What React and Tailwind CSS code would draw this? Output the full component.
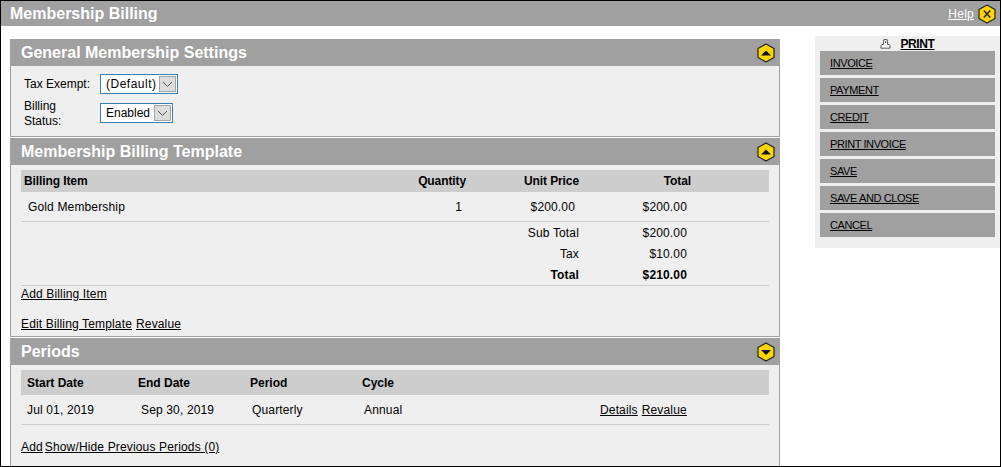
const sans = { fontFamily: '"Liberation Sans", Arial, sans-serif' };

function Hex({ children, size = 20 }) {
  return (
    <svg width={size} height={size} viewBox="0 0 20 20" className="shrink-0">
      <path d="M10 1 L18 5.5 V14.5 L10 19 L2 14.5 V5.5 Z" fill="#fdd600" stroke="#222" strokeWidth="1.2" strokeLinejoin="round" />
      {children}
    </svg>
  );
}

const ArrowUp = () => <path d="M5 12.5 L10 7.5 L15 12.5 Z" fill="#111" />;
const ArrowDown = () => <path d="M5 8 L15 8 L10 13 Z" fill="#111" />;

function SectionHeader({ title, down }) {
  return (
    <div className="flex h-[27px] items-center justify-between bg-[#a0a0a0] pl-[11px] pr-[4px]">
      <span className="text-[16px] font-bold tracking-normal text-white">{title}</span>
      <Hex>{down ? <ArrowDown /> : <ArrowUp />}</Hex>
    </div>
  );
}

function FakeSelect({ label, width, spacing }) {
  return (
    <div className={`flex h-[20px] items-center justify-between border border-[#3c7fb1] bg-white pr-px pl-[5px] ${width}`}>
      <span className={`text-[12px] text-black ${spacing}`}>{label}</span>
      <span className="flex h-[16px] w-[17px] items-center justify-center border border-[#a5a5a5] bg-[#dcdcdc]">
        <svg width="11" height="7" viewBox="0 0 11 7"><path d="M1 1 L5.5 5.5 L10 1" fill="none" stroke="#555" strokeWidth="1" /></svg>
      </span>
    </div>
  );
}

const TextLink = ({ children }) => <a className="text-[12px] text-black underline">{children}</a>;

const actions = ['INVOICE', 'PAYMENT', 'CREDIT', 'PRINT INVOICE', 'SAVE', 'SAVE AND CLOSE', 'CANCEL'];

export default function App() {
  return (
    <div style={sans} className="flex h-[467px] w-[1001px] flex-col overflow-hidden border border-black bg-white text-[12px] tracking-[0.15px] text-black">
      {/* page title */}
      <div className="flex h-[25px] shrink-0 items-center justify-between bg-[#a0a0a0] pr-[3px] pl-[9px]">
        <span className="text-[16px] font-bold tracking-normal text-white">Membership Billing</span>
        <div className="flex items-center gap-[3px]">
          <a className="text-[12px] tracking-[0.25px] text-white underline">Help</a>
          <Hex>
            <path d="M6.8 6.5 L13.2 13.5 M13.2 6.5 L6.8 13.5" stroke="#222" strokeWidth="1.5" fill="none" />
          </Hex>
        </div>
      </div>

      <div className="flex min-h-0 flex-1 pl-[9px]">
        {/* main column */}
        <div className="w-[770px] shrink-0 pt-[13px]">
          <SectionHeader title="General Membership Settings" />
          <div className="h-[71px] border-x border-b border-[#a0a0a0] bg-[#efefef] pt-[8px] pl-[13px]">
            <div className="flex h-[20px] items-center">
              <span className="w-[76px] tracking-normal">Tax Exempt:</span>
              <FakeSelect label="(Default)" width="w-[78px]" spacing="tracking-[0.5px]" />
            </div>
            <div className="mt-[9px] flex h-[20px] items-center">
              <span className="w-[76px] pt-[2px] leading-[15px] tracking-normal">Billing<br />Status:</span>
              <FakeSelect label="Enabled" width="w-[73px]" spacing="tracking-normal" />
            </div>
          </div>

          <div className="mt-px">
            <SectionHeader title="Membership Billing Template" />
          </div>
          <div className="h-[172px] border-x border-b border-[#a0a0a0] bg-[#efefef] px-[10px] pt-[5px]">
            <div className="flex h-[22px] items-center bg-[#cdcdcd] font-bold tracking-[-0.1px]">
              <span className="w-[395px] pl-[3px]">Billing Item</span>
              <span className="w-[50px] text-right">Quantity</span>
              <span className="w-[113px] text-right">Unit Price</span>
              <span className="w-[112px] text-right">Total</span>
            </div>
            <div className="flex h-[30px] items-center border-b border-[#cdcdcd]">
              <span className="w-[399px] pl-[7px]">Gold Membership</span>
              <span className="w-[42px] text-right">1</span>
              <span className="w-[113px] text-right">$200.00</span>
              <span className="w-[112px] text-right">$200.00</span>
            </div>
            <div className="flex h-[21px] items-center">
              <span className="w-[558px] text-right">Sub Total</span>
              <span className="w-[108px] text-right">$200.00</span>
            </div>
            <div className="flex h-[21px] items-center">
              <span className="w-[558px] text-right">Tax</span>
              <span className="w-[108px] text-right">$10.00</span>
            </div>
            <div className="flex h-[22px] items-center border-b border-[#cdcdcd] font-bold">
              <span className="w-[558px] text-right">Total</span>
              <span className="w-[108px] text-right">$210.00</span>
            </div>
            <div className="mt-px h-[30px] leading-[15px]">
              <TextLink>Add Billing Item</TextLink>
            </div>
            <div className="flex gap-[4px] leading-[15px]">
              <TextLink>Edit Billing Template</TextLink>
              <TextLink>Revalue</TextLink>
            </div>
          </div>

          <div className="mt-px">
            <SectionHeader title="Periods" down />
          </div>
          <div className="h-[120px] border-x border-[#a0a0a0] bg-[#efefef] px-[10px] pt-[5px]">
            <div className="flex h-[25px] items-center bg-[#cdcdcd] font-bold tracking-normal">
              <span className="w-[117px] pl-[6px]">Start Date</span>
              <span className="w-[112px]">End Date</span>
              <span className="w-[112px]">Period</span>
              <span>Cycle</span>
            </div>
            <div className="flex h-[30px] items-center border-b border-[#cdcdcd]">
              <span className="w-[120px] pl-[6px]">Jul 01, 2019</span>
              <span className="w-[111px]">Sep 30, 2019</span>
              <span className="w-[112px]">Quarterly</span>
              <span className="w-[236px]">Annual</span>
              <span className="flex gap-[4px]">
                <TextLink>Details</TextLink>
                <TextLink>Revalue</TextLink>
              </span>
            </div>
            <div className="mt-[15px] flex gap-[2px] leading-[15px]">
              <TextLink>Add</TextLink>
              <TextLink>Show/Hide Previous Periods (0)</TextLink>
            </div>
          </div>
        </div>

        {/* action panel */}
        <div className="mt-[10px] ml-[35px] h-[212px] w-[185px] shrink-0 bg-[#efefef] px-[5px]">
          <div className="flex h-[15px] items-center justify-center gap-[9px]">
            <svg width="11" height="12" viewBox="0 0 12 12">
              <path d="M4.2 1.2 H7.8 L8.4 6.5 H10 Q11.2 7 11 10.5 H1 Q0.8 7 2 6.5 H3.6 Z" fill="#fff" stroke="#333" strokeWidth="0.9" />
              <path d="M6 3 V5" stroke="#333" strokeWidth="1" />
            </svg>
            <a className="text-[12px] font-bold tracking-[-0.4px] text-black underline">PRINT</a>
          </div>
          <div className="flex flex-col gap-[3px]">
            {actions.map((a) => (
              <div key={a} className="flex h-[24px] items-center bg-[#a0a0a0] pl-[10px]">
                <a className="text-[11px] tracking-[-0.4px] text-black underline">{a}</a>
              </div>
            ))}
          </div>
        </div>
      </div>
    </div>
  );
}
